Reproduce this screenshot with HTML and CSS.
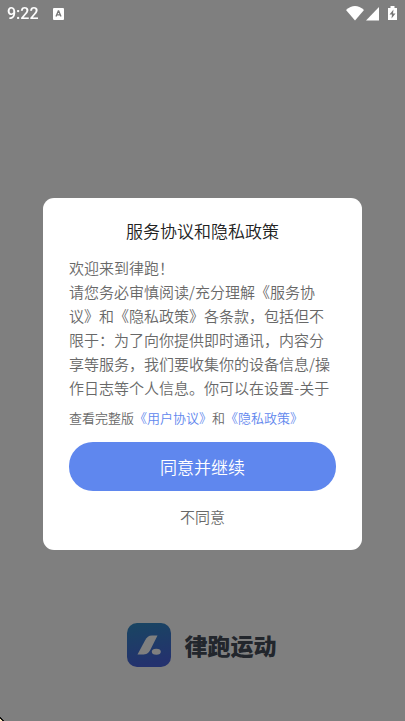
FILE: index.html
```html
<!DOCTYPE html>
<html lang="zh-CN">
<head>
<meta charset="utf-8">
<meta name="viewport" content="width=device-width, initial-scale=1">
<title>律跑运动</title>
<link rel="stylesheet" href="styles.css">
</head>
<body>
<main class="splash">
  <div class="brand">
    <svg class="brand-icon" viewBox="0 0 44 44" aria-hidden="true">
      <defs>
        <linearGradient id="tile" x1="0" y1="0" x2="0.2" y2="1">
          <stop offset="0" stop-color="#328cc4"/>
          <stop offset="1" stop-color="#4864dc"/>
        </linearGradient>
      </defs>
      <rect width="44" height="44" rx="10" fill="url(#tile)"/>
      <path d="M30.500 12.500H25C21.500 12.500 20 14 18 17.500L10.500 31.500H15C19.500 31.500 21.500 30.500 23.500 26.500Z" fill="#fff"/>
      <ellipse cx="29.300" cy="28.800" rx="4.500" ry="3" fill="#fff"/>
    </svg>
    <span class="brand-name">律跑运动</span>
  </div>
</main>
<div class="overlay">
  <header class="status">
    <span class="clock">9:22</span>
    <svg class="badge" viewBox="0 0 11 12" aria-hidden="true">
      <rect width="11" height="12" rx="1" fill="#fff"/>
      <path d="M3 8.500 5.300 3H5.700L8 8.500M4 6.800H7" fill="none" stroke="#777" stroke-width="1.300"/>
    </svg>
    <svg class="signals" viewBox="0 0 52 15" aria-hidden="true">
      <path d="M0 4Q9-4 18 4L9 14.500Z" fill="#fff"/>
      <path d="M33 1V14.500H20Z" fill="#fff"/>
      <path d="M42 2H44.500V0H48.500V2H51V14H42Z" fill="#fff"/>
      <path d="M47.500 3.500 43.500 8.500H46L45.500 12.500 49.500 7.500H47Z" fill="#777"/>
    </svg>
  </header>
  <div class="stage">
    <section class="dialog" role="dialog" aria-modal="true" aria-labelledby="dialog-title">
      <h1 class="title" id="dialog-title">服务协议和隐私政策</h1>
      <div class="terms">
        <p class="greeting">欢迎来到律跑！</p>
        <p class="detail">请您务必审慎阅读/充分理解《服务协议》和《隐私政策》各条款，包括但不限于：为了向你提供即时通讯，内容分享等服务，我们要收集你的设备信息/操作日志等个人信息。你可以在设置-关于</p>
      </div>
      <p class="links">查看完整版<a href="#agreement">《用户协议》</a>和<a href="#privacy">《隐私政策》</a></p>
      <button class="accept" type="button">同意并继续</button>
      <button class="decline" type="button">不同意</button>
    </section>
  </div>
  <svg class="corner" viewBox="0 0 4 4" aria-hidden="true">
    <path d="M0 0H1V1H2V2H3V3H4V4H0Z" fill="#111"/>
    <path d="M0 2H1V3H2V4H0Z" fill="#ffe9b8"/>
  </svg>
</div>
</body>
</html>
```
FILE: styles.css
```css
* {
  box-sizing: border-box;
}

body {
  margin: 0;
  background: #fff;
  color: #686868;
  font-family: "Noto Sans CJK SC", sans-serif;
  font-weight: 350;
}

h1,
p {
  margin: 0;
  font-weight: inherit;
}

.splash {
  display: flex;
  flex-direction: column;
  justify-content: flex-end;
  align-items: center;
  min-height: 100vh;
  padding-bottom: 54px;
}

.brand {
  display: flex;
  align-items: center;
  gap: 14px;
  padding-right: 2px;
}

.brand-icon {
  width: 44px;
  height: 44px;
}

.brand-name {
  color: #444c58;
  font-size: 23px;
  line-height: 32px;
  font-weight: 900;
}

.overlay {
  position: fixed;
  inset: 0;
  display: flex;
  flex-direction: column;
  background: rgba(0, 0, 0, 0.5);
}

.status {
  display: flex;
  align-items: center;
  height: 27px;
  padding: 0 7px;
  color: #fff;
}

.clock {
  font: 500 16px/20px Roboto, sans-serif;
}

.badge {
  width: 11px;
  height: 12px;
  margin-left: 14px;
}

.signals {
  width: 52px;
  height: 15px;
  margin-left: auto;
}

.stage {
  flex: 1;
  display: flex;
  align-items: center;
  padding: 0 43px;
}

.dialog {
  display: flex;
  flex-direction: column;
  width: 100%;
  padding: 20px 26px;
  border-radius: 11px;
  background: #fff;
}

.title {
  color: #222;
  font-size: 17px;
  line-height: 26px;
  text-align: center;
}

.terms {
  margin-top: 12px;
  font-size: 15px;
  line-height: 24px;
}

.links {
  margin-top: 8px;
  font-size: 13px;
  line-height: 20px;
}

.links a {
  color: #5f87ee;
  text-decoration: none;
}

.accept,
.decline {
  border: 0;
  font-family: inherit;
  font-weight: inherit;
}

.accept {
  height: 49px;
  margin-top: 14px;
  border-radius: 24px;
  background: #5f87ee;
  color: #fff;
  font-size: 17px;
}

.decline {
  align-self: center;
  margin-top: 13px;
  padding: 0 16px;
  background: none;
  color: #686868;
  font-size: 15px;
  line-height: 26px;
}

.corner {
  position: absolute;
  left: 0;
  bottom: 0;
  width: 4px;
  height: 4px;
}
```
